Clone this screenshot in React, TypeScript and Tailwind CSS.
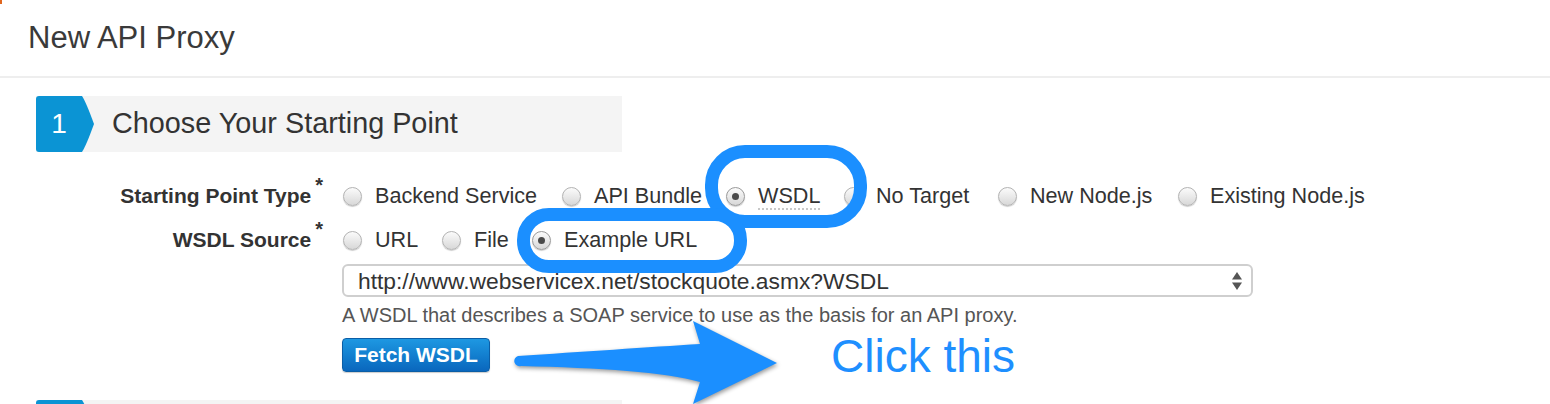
import React from "react";

const Radio = ({ checked = false }: { checked?: boolean }) => (
  <span
    className={
      "relative flex h-[19px] w-[19px] shrink-0 items-center justify-center rounded-full border bg-linear-to-b from-[#fbfbfb] to-[#d8d8d8] shadow-[0_1px_1px_rgba(0,0,0,0.2)] " +
      (checked ? "border-[#9a9a9a]" : "border-[#b3b3b3]")
    }
  >
    {checked && <span className="h-[7px] w-[7px] rounded-full bg-[#4a4a4a]" />}
  </span>
);

const StepHeader = ({ n, title }: { n?: string; title?: string }) => (
  <div className="ml-[36px] flex h-[56px] w-[586px] items-center bg-[#f4f4f4]">
    <div className="flex h-full w-[46px] items-center justify-center rounded-l-[3px] bg-[#0b94d4] text-[28px] text-white">
      {n}
    </div>
    <svg width="12" height="56" viewBox="0 0 12 56" className="shrink-0">
      <path d="M0 0 Q4 6 12 28 Q4 50 0 56 Z" fill="#0b94d4" />
    </svg>
    {title && <div className="ml-[18px] text-[28.8px] text-[#333]">{title}</div>}
  </div>
);

const Label = ({ text }: { text: string }) => (
  <div className="flex w-[323px] shrink-0 items-start justify-end font-bold text-[21px] text-[#333]">
    <span>{text}</span>
    <span className="ml-[4px] -mt-[5px] text-[20px] leading-[20px]">*</span>
  </div>
);

export default function App() {
  return (
    <div className="relative h-[404px] w-[1550px] overflow-hidden bg-white font-['Liberation_Sans',Arial,sans-serif] text-[#333]">
      <span className="absolute left-0 top-0 h-[4px] w-[2px] bg-[#e0661f]" />

      <div className="h-[78px] border-b-2 border-[#eeeeee] pl-[28px] pt-[20px]">
        <div className="text-[31px] leading-[36px] text-[#3a3a3a]">New API Proxy</div>
      </div>

      <div className="mt-[18px]">
        <StepHeader n="1" title="Choose Your Starting Point" />
      </div>

      <div className="mt-[28px] flex h-[32px] items-center">
        <Label text="Starting Point Type" />
        <div className="ml-[20px] flex items-center text-[21.6px] text-[#333]">
          <div className="flex w-[219px] items-center">
            <Radio />
            <span className="ml-[13px]">Backend Service</span>
          </div>
          <div className="flex w-[164px] items-center">
            <Radio />
            <span className="ml-[13px]">API Bundle</span>
          </div>
          <div className="flex w-[118px] items-center">
            <Radio checked />
            <span className="ml-[13px] border-b-2 border-dotted border-[#c8c8c8] leading-[25px]">WSDL</span>
          </div>
          <div className="flex w-[154px] items-center">
            <Radio />
            <span className="ml-[13px]">No Target</span>
          </div>
          <div className="flex w-[180px] items-center">
            <Radio />
            <span className="ml-[13px]">New Node.js</span>
          </div>
          <div className="flex items-center">
            <Radio />
            <span className="ml-[13px]">Existing Node.js</span>
          </div>
        </div>
      </div>

      <div className="mt-[12px] flex h-[32px] items-center">
        <Label text="WSDL Source" />
        <div className="ml-[20px] flex items-center text-[21.6px] text-[#333]">
          <div className="flex w-[99px] items-center">
            <Radio />
            <span className="ml-[13px]">URL</span>
          </div>
          <div className="flex w-[90px] items-center">
            <Radio />
            <span className="ml-[13px]">File</span>
          </div>
          <div className="flex items-center">
            <Radio checked />
            <span className="ml-[13px]">Example URL</span>
          </div>
        </div>
      </div>

      <div className="ml-[342px]">
        <div className="mt-[8px] flex h-[33px] w-[911px] items-center justify-between rounded-[6px] border-2 border-[#cfcfcf] pl-[14px] pr-[9px]">
          <span className="text-[22.8px] leading-[26px] text-[#333]">
            http://www.webservicex.net/stockquote.asmx?WSDL
          </span>
          <svg width="10" height="20" viewBox="0 0 10 20">
            <path d="M0 8.5 L5 1 L10 8.5 Z" fill="#555" />
            <path d="M0 11.5 L5 19 L10 11.5 Z" fill="#555" />
          </svg>
        </div>

        <div className="mt-[6px] text-[20px] leading-[24px] text-[#555]">
          A WSDL that describes a SOAP service to use as the basis for an API proxy.
        </div>

        <button className="mt-[11px] flex h-[34px] w-[148px] items-center justify-center rounded-[4px] border border-[#0b5ea6] bg-linear-to-b from-[#1e98e2] to-[#0a67bd] text-[21px] font-bold text-white shadow-[0_1px_1px_rgba(0,0,0,0.2)]">
          Fetch WSDL
        </button>
      </div>

      <div className="mt-[28px]">
        <StepHeader />
      </div>

      {/* Annotations */}
      <div className="pointer-events-none absolute left-[705px] top-[145px] h-[83px] w-[162px] rounded-[40px] border-[13px] border-[#1b8fff]" />
      <div className="pointer-events-none absolute left-[517px] top-[208px] h-[65px] w-[230px] rounded-[32px] border-[13px] border-[#1b8fff]" />

      <svg
        className="pointer-events-none absolute left-[500px] top-[310px] drop-shadow-[1px_2px_2px_rgba(0,0,0,0.4)]"
        width="290"
        height="94"
        viewBox="500 310 290 94"
      >
        <path
          d="M518 356 C580 352 650 347 700 344 L693 321 L777 363 L693 404 L700 382 C665 372 600 368 521 366 A5 5 0 0 1 518 356 Z"
          fill="#1b8fff"
        />
      </svg>

      <div className="absolute left-[831px] top-[333px] text-[46px] leading-[46px] text-[#1e8fff]">
        Click this
      </div>
    </div>
  );
}
